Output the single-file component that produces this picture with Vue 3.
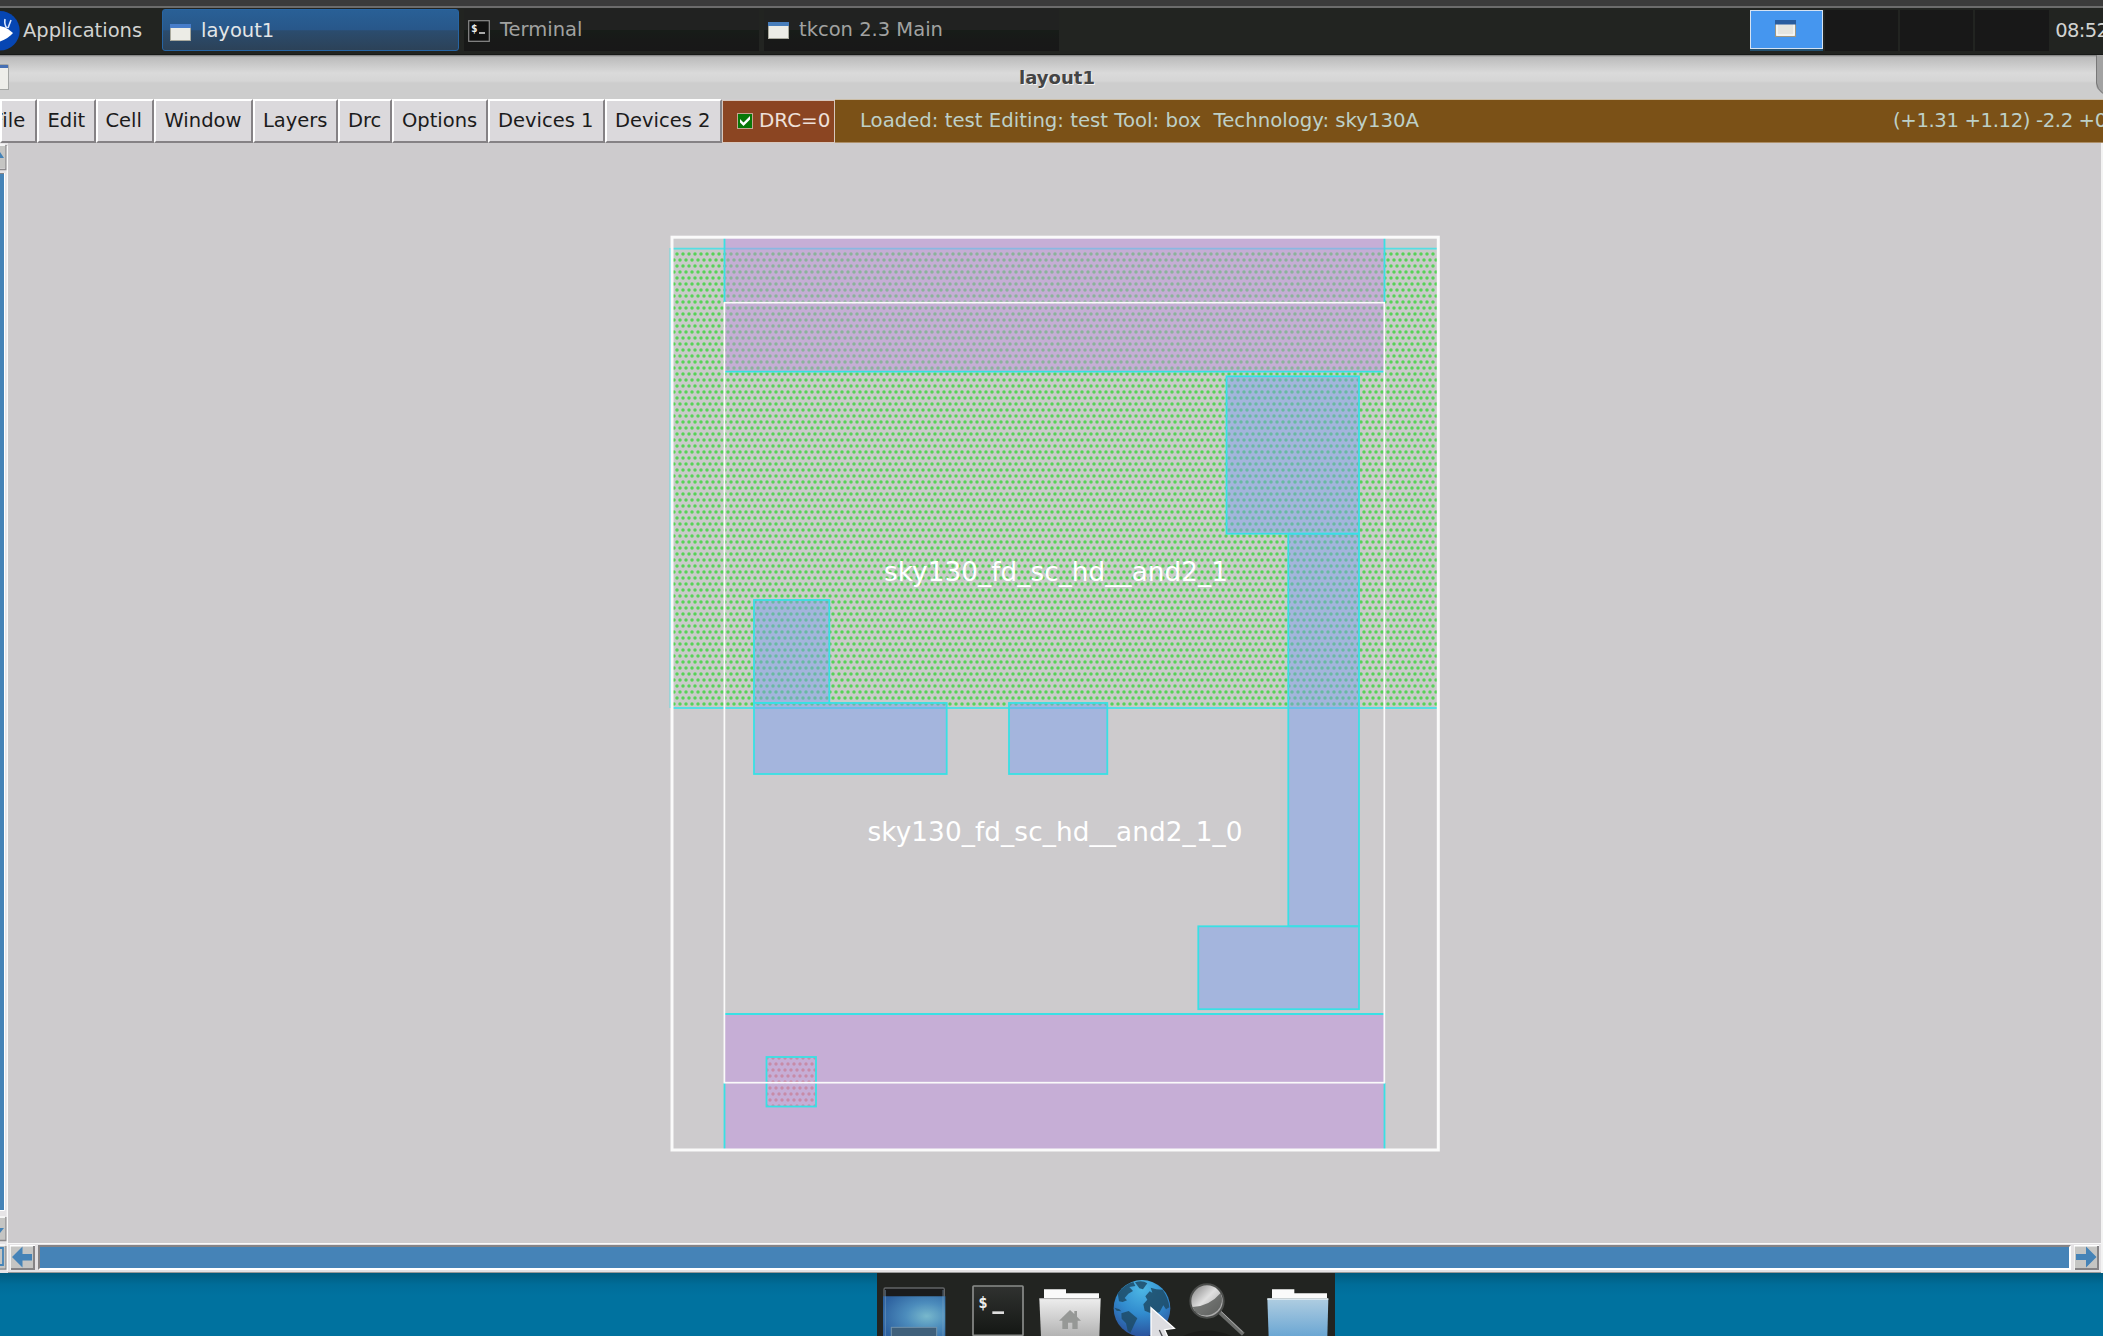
<script setup>
const menus = [
  { label: 'File', width: 37, left: -9.5 },
  { label: 'Edit', width: 59, left: 8.5 },
  { label: 'Cell', width: 58, left: 7.5 },
  { label: 'Window', width: 99, left: 8.5 },
  { label: 'Layers', width: 85, left: 8 },
  { label: 'Drc', width: 54, left: 8 },
  { label: 'Options', width: 96, left: 8 },
  { label: 'Devices 1', width: 117, left: 8 },
  { label: 'Devices 2', width: 117, left: 8 },
]
const metal = [
  [1226.5, 376.3, 132.5, 157.4],
  [1288.3, 533.7, 70.7, 392.6],
  [1198.3, 926.3, 160.7, 82.9],
  [754, 600, 75.3, 103],
  [754, 703, 192.7, 71],
  [1009, 703, 98.3, 71],
]
</script>

<template>
  <div class="screen">
    <div class="bezel"></div>
    <header class="panel">
      <div class="apps">
        <svg width="20" height="46" viewBox="0 8 20 46">
          <circle cx="0" cy="30.7" r="19.7" fill="#0646b3" />
          <path d="M0 26Q5 27 8 29L13 33Q9 38 0 41.500Z" fill="#fff" />
          <path d="M5 19Q4 25 7 28M11 20L8 28" stroke="#d8e6ff" stroke-width="1.6" fill="none" />
        </svg>
        <span>Applications</span>
      </div>
      <div class="task active">
        <svg class="win" width="21" height="17" viewBox="0 0 21 17"><rect width="21" height="17" fill="#a9a99d" /><rect x="1" y="4" width="19" height="12" fill="#ecece6" /><rect width="21" height="4" fill="#477dca" /></svg>
        <span>layout1</span>
      </div>
      <div class="task term">
        <svg width="22" height="22" viewBox="0 0 22 22"><rect x=".7" y=".7" width="20.600" height="20.600" fill="#111" stroke="#8c8c8c" stroke-width="1.200" /><text x="3" y="11.500" class="prompt">$</text><path d="M11 13h6" stroke="#ddd" stroke-width="1.500" /></svg>
        <span>Terminal</span>
      </div>
      <div class="task">
        <svg class="win" width="21" height="17" viewBox="0 0 21 17"><rect width="21" height="17" fill="#a9a99d" /><rect x="1" y="4" width="19" height="12" fill="#ecece6" /><rect width="21" height="4" fill="#477dba" /></svg>
        <span>tkcon 2.3 Main</span>
      </div>
      <div class="pager">
        <div class="desk current">
          <svg width="21" height="17" viewBox="0 0 21 17"><rect x=".5" y=".5" width="20" height="16" fill="#e5e5e0" stroke="#9c9684" /><path d="M2 4v11h17V4" fill="none" stroke="#fff" /><rect width="21" height="4.500" fill="#285c9f" /></svg>
        </div>
        <div class="desk"></div>
        <div class="desk"></div>
        <div class="desk"></div>
      </div>
      <span class="clock">08:52</span>
    </header>

    <div class="title">
      <svg class="corner" width="9" height="29" viewBox="0 0 9 29"><path d="M0 1H7Q9 1 9 3V27H0Z" fill="#a4a6a4" /><path d="M0 2h8v3H0z" fill="#4670b4" /><path d="M0 5h8v21H0z" fill="#eeeeea" /></svg>
      <span>layout1</span>
      <svg width="7" height="42" viewBox="0 0 7 42"><path d="M0 0H7V39Q0 34 0 29Z" fill="#a2a2a2" /><path d="M.5 0V28Q1 34 7 38.500" fill="none" stroke="#777" /></svg>
    </div>

    <nav class="menubar">
      <button v-for="m in menus" :key="m.label" :style="{ width: m.width + 'px', textIndent: m.left + 'px' }">{{ m.label }}</button>
      <div class="drc">
        <svg width="16" height="16" viewBox="0 0 16 16"><rect width="16" height="16" fill="#c5a591" /><rect x="1" y="1" width="14" height="14" fill="#087808" /><path d="M3 6L6.500 9.500L13 3V6.500L6.500 13L3 9.500Z" fill="#fff" /></svg>
        <span>DRC=0</span>
      </div>
      <div class="status">
        <span class="loaded">Loaded: test Editing: test Tool: box&nbsp; Technology: sky130A</span>
        <span class="coords">(+1.31 +1.12) -2.2 +0</span>
      </div>
    </nav>

    <main class="work">
      <aside class="vbar">
        <svg width="8" height="1130" viewBox="0 143 8 1130">
          <rect y="143" width="8" height="1130" fill="#e6e4e6" />
          <g fill="#c5c5c3"><rect y="146" width="5" height="22" /><rect y="1218" width="5" height="22" /><rect y="1246" width="5" height="22" /></g>
          <path d="M0 169.500H6V145M0 1240.500H6V1217M0 1269H6V1246" fill="none" stroke="#8b898b" stroke-width="1.500" />
          <path d="M0 145H5M0 1217H5M0 1245H5M7.400 146V1271" fill="none" stroke="#fafafa" stroke-width="1.500" />
          <path d="M0 152L4 158H0ZM0 1228H4L0 1233Z" fill="#4583b7" />
          <rect y="174" width="4" height="1036" fill="#4583b7" />
          <path d="M0 173.500H4" stroke="#858385" />
          <path d="M4.500 173V1210.500H0" stroke="#fff" fill="none" />
          <path d="M0 1248H3V1265H0" stroke="#4583b7" stroke-width="1.800" fill="none" />
        </svg>
      </aside>
      <section class="editor">
        <svg class="canvas" width="2093" height="1100" viewBox="8 143 2093 1100">
          <defs>
            <pattern id="wellDots" x="677" y="254" width="6" height="12" patternUnits="userSpaceOnUse">
              <g fill="#57d257"><circle cx="0" cy="0" r="1.750" /><circle cx="6" cy="0" r="1.750" /><circle cx="0" cy="12" r="1.750" /><circle cx="6" cy="12" r="1.750" /><circle cx="3" cy="6" r="1.750" /></g>
            </pattern>
            <pattern id="tapDots" x="770" y="1064" width="6" height="12" patternUnits="userSpaceOnUse">
              <g fill="#c78ba8"><circle cx="0" cy="0" r="1.700" /><circle cx="6" cy="0" r="1.700" /><circle cx="0" cy="12" r="1.700" /><circle cx="6" cy="12" r="1.700" /><circle cx="3" cy="6" r="1.700" /></g>
            </pattern>
          </defs>
          <rect x="671" y="248.500" width="767" height="459.500" fill="#cacbca" />
          <rect x="673" y="251" width="764" height="457" fill="url(#wellDots)" />
          <path d="M671 248.700H1438M671 708H1438M670.500 248V708" class="edge soft" />
          <g fill="#bf91df" fill-opacity=".5">
            <rect x="724.500" y="237" width="660" height="134.700" />
            <rect x="724.500" y="1014" width="660" height="136" />
          </g>
          <path d="M724.500 237V302M1384.500 237V302M724.500 371.700H1384M724.500 1014H1384M724.500 1083V1150M1384.500 1083V1150" class="edge" />
          <g fill="#7b9fed" fill-opacity=".5">
            <rect v-for="(r, i) in metal" :key="i" :x="r[0]" :y="r[1]" :width="r[2]" :height="r[3]" class="edge" />
          </g>
          <rect x="766.500" y="1057" width="49.500" height="49.500" fill="url(#tapDots)" class="edge" />
          <rect x="724.400" y="302.700" width="659.900" height="780" class="bound" stroke-width="1.700" />
          <rect x="672" y="237.200" width="766.300" height="912.800" class="bound" stroke-width="3" />
          <text x="884" y="581" textLength="344" class="cell">sky130_fd_sc_hd__and2_1</text>
          <text x="867.500" y="840.500" textLength="375" class="cell">sky130_fd_sc_hd__and2_1_0</text>
        </svg>
        <div class="hbar">
          <svg width="25" height="25" viewBox="0 0 25 25"><rect width="25" height="25" fill="#c5c5c3" /><path d="M0 25V.75H25" class="lit" /><path d="M1 24H24V1" class="shade" /><path d="M2 12L12.500 1.500V9H22V15.500H12.500V22.500Z" fill="#4583b7" /></svg>
          <div class="thumb"></div>
          <svg width="25" height="25" viewBox="0 0 25 25"><rect width="25" height="25" fill="#c5c5c3" /><path d="M0 25V.75H25" class="lit" /><path d="M1 24H24V1" class="shade" /><path d="M22.500 12L12 1.500V9H2V15H12V22.500Z" fill="#4583b7" /></svg>
        </div>
      </section>
      <div class="rightedge"></div>
    </main>

    <footer class="desktop">
      <div class="dock">
        <svg width="458" height="63" viewBox="51 129 1374 189">
          <defs>
            <radialGradient id="wall" cx=".7" cy=".5" r=".75"><stop offset="0" stop-color="#78b8cc" /><stop offset=".45" stop-color="#4c8cbc" /><stop offset="1" stop-color="#2d619f" /></radialGradient>
            <linearGradient id="paper" x2="0" y2="1"><stop stop-color="#ededed" /><stop offset="1" stop-color="#b2b2b2" /></linearGradient>
            <linearGradient id="sky" x2="0" y2="1"><stop stop-color="#afcde1" /><stop offset="1" stop-color="#6aa6d3" /></linearGradient>
            <radialGradient id="sea" cx=".5" cy=".15" r=".9"><stop stop-color="#4db8e5" /><stop offset=".5" stop-color="#318bce" /><stop offset="1" stop-color="#2a4b96" /></radialGradient>
            <linearGradient id="glass" x2="1" y2="1"><stop stop-color="#777" /><stop offset=".45" stop-color="#e0e0e0" /><stop offset="1" stop-color="#8b8b8b" /></linearGradient>
            <linearGradient id="term" x2="0" y2="1"><stop stop-color="#303230" /><stop offset="1" stop-color="#141714" /></linearGradient>
          </defs>
          <rect x="72" y="174" width="181" height="30" rx="4" fill="#1a1b1c" stroke="#626466" stroke-width="4" />
          <path d="M69 199H256V318H69Z" fill="url(#wall)" /><path d="M76 180V318M249 180V318" stroke="#86a9c5" stroke-opacity=".5" stroke-width="3" /><rect x="94" y="292" width="136" height="40" fill="#3f607b" stroke="#7292aa" stroke-width="3" />
          <rect x="339" y="168" width="150" height="148" rx="2" fill="url(#term)" stroke="#8b8d8b" stroke-width="5" />
          <text x="355" y="235" class="dollar">$</text><path d="M397 248H432" stroke="#ddd" stroke-width="8" />
          <path d="M552 205V178H618V190H717V205Z" fill="#fafafa" /><path d="M538 206H722L718 320H543Z" fill="url(#paper)" /><path d="M538 206H722" stroke="#bbb" stroke-width="3" />
          <path d="M597 272L630 240L643 252V243H651V260L663 272H653V297H637V278H624V297H607V272Z" fill="#969896" />
          <circle cx="846" cy="235" r="85" fill="url(#sea)" />
          <g fill="#1d4b67" fill-opacity=".85">
            <path d="M773 190Q795 163 820 156L826 168L808 171L819 183L805 191L794 204L801 211L788 216L777 214Z" />
            <path d="M825 157Q847 149 862 160L849 178L838 175Z" />
            <path d="M784 250L806 243L832 265L822 285L811 309L803 302L798 280L785 266Z" />
            <path d="M850 223L862 209L856 199L869 184L877 188L872 173L889 178L908 179Q925 203 928 232L918 238L910 226L899 246L883 252L869 248L854 242Z" />
            <path d="M763 233L778 238L784 244L770 242Z" />
          </g>
          <path d="M873 233L943 295L914 299L923 320H882L873 328Z" fill="#dddde1" stroke="#fff" stroke-width="4" /><path d="M898 300L912 330" stroke="#494b50" stroke-width="4" />
          <path d="M1078 246L1150 313" stroke="#6c6e6c" stroke-width="12" /><path d="M1083 244L1148 306" stroke="#a8a8a8" stroke-width="3" />
          <circle cx="1041" cy="213" r="50" fill="url(#glass)" stroke="#4c4e4c" stroke-width="6" /><path d="M998 231Q1048 229 1082 189Q1094 219 1072 242Q1038 269 1006 246Z" fill="#464846" fill-opacity=".7" />
          <path d="M970 318Q1037 285 1115 318Z" fill="#1b1c1a" />
          <path d="M1236 205V178H1303V190H1401V205Z" fill="#fafafa" /><path d="M1222 206H1405L1402 320H1226Z" fill="url(#sky)" /><path d="M1222 207H1405" stroke="#e8f1f5" stroke-width="4" />
        </svg>
      </div>
    </footer>
  </div>
</template>

<style>
body { margin: 0; overflow: hidden; }
</style>
<style scoped>
.screen { width: 2103px; height: 1336px; overflow: hidden; background: #00729f; font-family: "DejaVu Sans", sans-serif; font-size: 19.5px; white-space: nowrap; }
.screen * { box-sizing: border-box; }
svg { display: block; flex: none; }
.bezel { height: 8px; background: #3b3b3b; border-bottom: 2px solid #6c6c6c; }
.panel { height: 47px; display: flex; background: #222421; border-bottom: 1px solid #171917; color: #d2d3d1; }
.apps { width: 162px; display: flex; flex: none; }
.apps span { margin-left: 3px; line-height: 45px; }
.task { width: 295px; height: 42px; margin: 1px 5px 0 0; padding-left: 4px; flex: none; display: flex; color: #a1a2a1; background: linear-gradient(#212221 0, #212221 49%, #171c18 51%, #181918 75%, #181818); line-height: 42px; }
.task span { margin-left: 10px; }
.task .win { margin-top: 13px; }
.task svg { margin-top: 11px; }
.active { width: 297px; margin-left: 0; padding-left: 7px; border: 1px solid #2765a4; border-radius: 3px; color: #e3e6e8; background: linear-gradient(#296096, #28578a 49%, #2b4c6e 52%, #2c4258); }
.active .win { margin-top: 14px; }
.prompt { font: bold 11px "DejaVu Sans Mono", monospace; fill: #eee; }
.pager { margin-left: 685.5px; display: flex; gap: 2px; padding-top: 2px; }
.desk { width: 73.3px; height: 41px; background: #181818; }
.current { border: 1.5px solid #d5e2f2; background: #4596ef; height: 39px; box-shadow: 0 2px #24516f; }
.current svg { margin: 9px 0 0 24.500px; }
.clock { margin-left: 6.5px; line-height: 45px; letter-spacing: -.6px; }
.title { height: 44px; background: linear-gradient(#777 0, #bbb 2px, #dadada 18px, #d5d5d5 26px, #cdcdcd 28px, #cdcdcd); display: flex; justify-content: space-between; font-size: 18px; font-weight: bold; color: #444; text-shadow: 1px 1px #f5f5f5; }
.title span { line-height: 46px; margin-left: 9px; }
.corner { margin-top: 8px; }
.menubar { height: 44px; display: flex; background: #d0ced0; line-height: 40px; }
.menubar button { flex: none; height: 44px; margin: 0; padding: 0; text-align: left; font: inherit; font-size: 19.5px; color: #1b1b1b; background: #dbd9dc; border: 2px solid; border-color: #fff #858285 #858285 #fff; overflow: hidden; }
.drc { width: 113px; height: 43px; margin-top: 1px; display: flex; flex: none; border: 1px solid #d7c7bd; background: #8b4522; color: #eee0da; font-size: 19.9px; }
.drc svg { margin: 12px 0 0 14px; }
.drc span { margin-left: 6px; }
.status { flex: 1; min-width: 0; display: flex; background: #7b5117; border-top: 1px solid #cbbda6; border-bottom: 1px solid #ad8f68; color: #bed0c7; overflow: hidden; font-size: 19.7px; }
.loaded { margin-left: 25px; width: 1033px; flex: none; line-height: 42px; }
.coords { line-height: 42px; letter-spacing: -.4px; }
.work { height: 1130px; display: flex; background: #cdcbcd; }
.vbar { width: 8px; }
.editor { width: 2093px; }
.canvas { height: 1100px; }
.hbar { height: 30px; padding: 2px 2px 3px 2px; display: flex; align-items: center; justify-content: space-between; background: #e4e2e4; border-top: 1px solid #f8f8f8; border-bottom: 1px solid #999; }
.thumb { width: 2033px; height: 25px; background: #4583b7; border: 2px solid; border-color: #858385 #fff #fff #858385; }
.lit { fill: none; stroke: #fff; stroke-width: 1.500px; }
.shade { fill: none; stroke: #858385; stroke-width: 2px; }
.rightedge { width: 2px; background: #f3f3f3; }
.edge { stroke: #39e0e4; stroke-width: 1.800px; }
.soft { fill: none; stroke: #55dfe3; }
path.edge { fill: none; }
.bound { fill: none; stroke: #fafafa; }
.cell { font: 26.3px "DejaVu Sans", sans-serif; fill: #fff; }
.desktop { height: 63px; display: flex; padding-left: 877px; background: linear-gradient(#005b7f 0, #006d99 12px, #00729f 22px); }
.dock { width: 458px; height: 63px; background: #222421; }
.dollar { font: bold 47px "DejaVu Sans Mono", monospace; fill: #eee; }
</style>
